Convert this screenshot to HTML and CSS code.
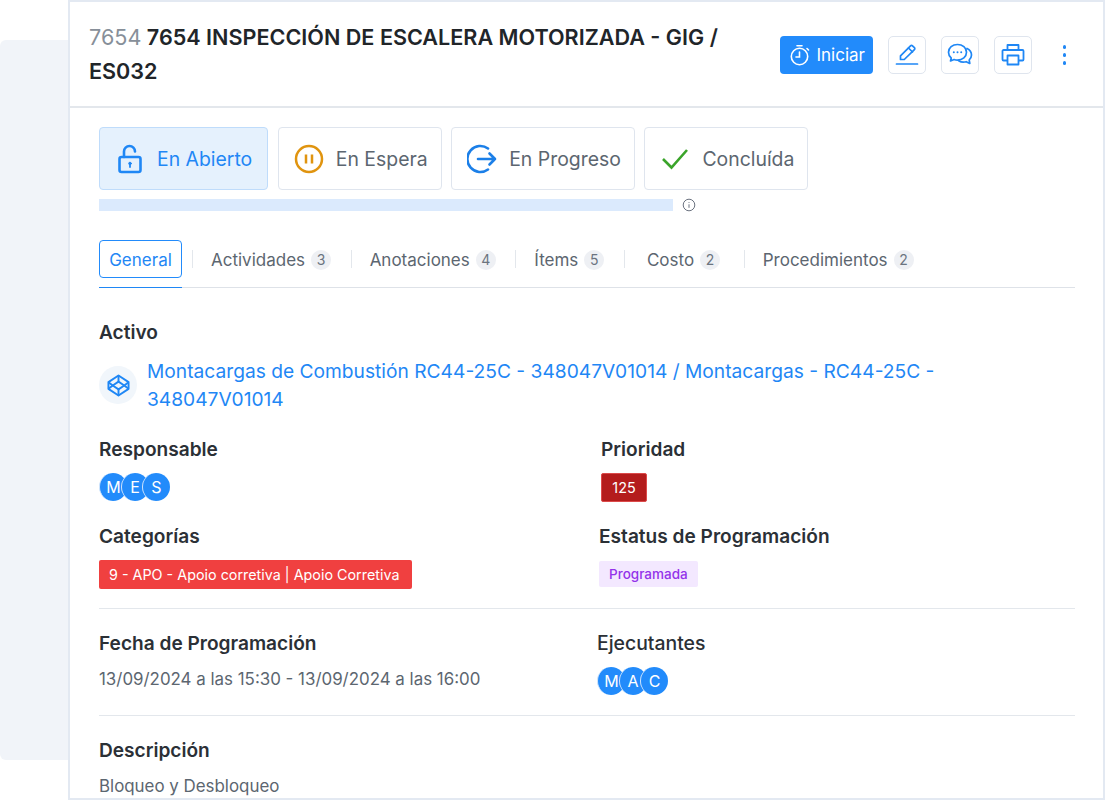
FILE: index.html
```html
<!DOCTYPE html>
<html lang="es">
  <head>
    <meta charset="UTF-8" />
    <title>Orden de servicio</title>
    <link rel="stylesheet" href="styles.css">
  </head>
  <body>
    <div class="page">
      <div class="sidebar"></div>
      <div class="panel">
        <div class="header">
          <h1 class="title"><span class="code">7654</span> 7654 INSPECCIÓN DE ESCALERA MOTORIZADA - GIG / ES032</h1>
          <div class="actions">
            <button class="startBtn">
              <svg width="22" height="22" viewBox="0 0 22 22" fill="none" stroke="#fff" stroke-width="1.6" stroke-linecap="round"><circle cx="10.5" cy="12.5" r="8.2"/><path d="M10.5 8v5H7M8 1.8h5M18 4.5l1.5 1.5"/></svg>
              Iniciar
            </button>
            <button class="iconBtn">
              <svg width="24" height="24" viewBox="0 0 24 24" fill="none" stroke="#1f87f5" stroke-width="1.7" stroke-linejoin="round" stroke-linecap="round"><path d="M5.5 16.5v-3.7L15.5 2.8a1.4 1.4 0 0 1 2 0l1.9 1.9a1.4 1.4 0 0 1 0 2L9.3 16.5z"/><path d="M13.5 5l4 4" /><path d="M1.5 21h21"/></svg>
            </button>
            <button class="iconBtn">
              <svg width="26" height="24" viewBox="0 0 26 24" fill="none" stroke="#1f87f5" stroke-width="1.7" stroke-linejoin="round" stroke-linecap="round"><path d="M10.5 1.5c-5 0-9 3.300-9 7.800 0 2.300 1 4.300 2.700 5.700l-.7 3 3.600-1.500c1 .4 2.200.6 3.400.6 5 0 9-3.300 9-7.800s-4-7.800-9-7.800z"/><path d="M20 5.500c2.700 1.300 4.500 3.700 4.500 6.500 0 2-.9 3.700-2.300 5l.6 3.500-3.600-1.800c-2.600.7-5.500.3-7.500-1"/><path d="M6.800 9.300h.01M10.500 9.300h.01M14.200 9.300h.01" stroke-width="2"/></svg>
            </button>
            <button class="iconBtn">
              <svg width="24" height="24" viewBox="0 0 24 24" fill="none" stroke="#1f87f5" stroke-width="1.8" stroke-linejoin="round"><path d="M6.500 7V2h11v5"/><path d="M6.500 17.500H2.500a1 1 0 0 1-1-1V8a1 1 0 0 1 1-1h19a1 1 0 0 1 1 1v8.500a1 1 0 0 1-1 1h-4"/><rect x="6.500" y="12.500" width="11" height="9"/><path d="M18.500 10h.01" stroke-width="2"/></svg>
            </button>
            <div class="moreBtn"><i></i><i></i><i></i></div>
          </div>
        </div>

        <div class="content">
          <div class="statusRow">
            <div class="status statusActive">
              <span class="statusIcon"><svg width="26" height="30" viewBox="0 0 26 30" fill="none" stroke="#1f87f5" stroke-width="2.600" stroke-linecap="round" stroke-linejoin="round"><path d="M7 13V7.500a5.500 5.500 0 0 1 11 0"/><rect x="2.500" y="13" width="21" height="15" rx="2"/><circle cx="13" cy="19.500" r="1.300" fill="#1f87f5" stroke-width="1"/><path d="M13 20v3" stroke-width="1.800"/></svg></span>
              En Abierto
            </div>
            <div class="status">
              <span class="statusIcon"><svg width="30" height="30" viewBox="0 0 30 30" fill="none" stroke="#e0940f" stroke-width="2.500"><circle cx="15" cy="15" r="13"/><path d="M12 10.500v9M18 10.500v9"/></svg></span>
              En Espera
            </div>
            <div class="status">
              <span class="statusIcon"><svg width="30" height="30" viewBox="0 0 30 30" fill="none" stroke="#1b7fe8" stroke-width="2.600" stroke-linecap="round" stroke-linejoin="round"><path d="M21 4.500A13 13 0 1 0 21 25.500"/><path d="M11 15h17M22.500 9.500l5.500 5.500-5.500 5.500"/></svg></span>
              En Progreso
            </div>
            <div class="status">
              <span class="statusIcon"><svg width="28" height="24" viewBox="0 0 28 24" fill="none" stroke="#3aa42a" stroke-width="2.600"><path d="M2 12l8.500 8.500L26 3"/></svg></span>
              Concluída
            </div>
          </div>

          <div class="progressRow">
            <div class="progressBar"></div>
            <svg class="infoIcon" width="14" height="14" viewBox="0 0 14 14" fill="none" stroke="#6b7280" stroke-width="1"><circle cx="7" cy="7" r="5.800"/><path d="M7 6.300v3.500M7 4.200v.8"/></svg>
          </div>

          <div class="tabs">
            <div class="tab tabActive">General</div>
            <span class="tabSep tabSepFirst"></span>
            <div class="tab">Actividades <span class="count">3</span></div>
            <span class="tabSep"></span>
            <div class="tab">Anotaciones <span class="count">4</span></div>
            <span class="tabSep"></span>
            <div class="tab">Ítems <span class="count">5</span></div>
            <span class="tabSep"></span>
            <div class="tab tabWide">Costo <span class="count">2</span></div>
            <span class="tabSep"></span>
            <div class="tab">Procedimientos <span class="count">2</span></div>
          </div>

          <h2 class="label labelActivo">Activo</h2>
          <div class="asset">
            <div class="assetIcon">
              <svg width="23" height="23" viewBox="0 0 24 24" fill="none" stroke="#1f87f5" stroke-width="2" stroke-linejoin="round"><path d="M12 1.500l10.500 7v7L12 22.500l-10.500-7v-7z"/><path d="M12 8l6 4-6 4-6-4z"/><path d="M12 1.500V8M12 16v6.500M1.500 8.500L6 12M22.500 8.500L18 12M1.500 15.500L6 12M22.500 15.500L18 12"/></svg>
            </div>
            <a class="assetLink">Montacargas de Combustión RC44-25C - 348047V01014 / Montacargas - RC44-25C - 348047V01014</a>
          </div>

          <div class="grid gridFirst">
            <div class="cell">
              <h2 class="label">Responsable</h2>
              <div class="avatars"><span>M</span><span>E</span><span>S</span></div>
            </div>
            <div class="cell cellPrio">
              <h2 class="label">Prioridad</h2>
              <span class="prio">125</span>
            </div>
          </div>

          <div class="grid gridSecond">
            <div class="cell">
              <h2 class="label">Categorías</h2>
              <span class="catTag">9 - APO - Apoio corretiva | Apoio Corretiva</span>
            </div>
            <div class="cell cellSched">
              <h2 class="label">Estatus de Programación</h2>
              <span class="schedTag">Programada</span>
            </div>
          </div>

          <hr class="divider" />

          <div class="grid">
            <div class="cell">
              <h2 class="label">Fecha de Programación</h2>
              <div class="bodyText">13/09/2024 a las 15:30 - 13/09/2024 a las 16:00</div>
            </div>
            <div class="cell cellExec">
              <h2 class="label labelPlain">Ejecutantes</h2>
              <div class="avatars"><span>M</span><span>A</span><span>C</span></div>
            </div>
          </div>

          <hr class="divider dividerLow" />

          <h2 class="label">Descripción</h2>
          <div class="bodyText">Bloqueo y Desbloqueo</div>
        </div>
      </div>
    </div>
  </body>
</html>
```
FILE: styles.css
```css
* {
  box-sizing: border-box;
}
html,
body {
  margin: 0;
  height: 800px;
  overflow: hidden;
  background: #fff;
}
body {
  font-family: Inter, "Liberation Sans", sans-serif;
  color: #212529;
}
.page {
  display: flex;
  height: 800px;
  padding-right: 1px;
}
.sidebar {
  width: 68px;
  flex: none;
  margin: 40px 0;
  background: #f1f4f9;
  border-radius: 6px 0 0 6px;
}
.panel {
  flex: 1;
  border: 2px solid #e3e9f2;
  background: #fff;
  overflow: hidden;
}
.header {
  display: flex;
  justify-content: space-between;
  height: 106px;
  padding: 18px 37px 0 19px;
  border-bottom: 2px solid #e3e7ec;
}
.title {
  width: 650px;
  margin: 0;
  font-size: 21.6px;
  font-weight: 600;
  line-height: 34px;
  color: #212529;
}
.code {
  font-weight: 400;
  color: #878f99;
}
.actions {
  display: flex;
  align-items: center;
  height: 38px;
  margin-top: 16px;
}
.startBtn {
  display: flex;
  align-items: center;
  gap: 6px;
  width: 93px;
  height: 38px;
  padding: 0 0 0 9px;
  margin-right: 15px;
  border: 0;
  border-radius: 4px;
  background: #228bfb;
  color: #fff;
  font: 400 17px Inter, sans-serif;
}
.iconBtn {
  display: flex;
  align-items: center;
  justify-content: center;
  width: 38px;
  height: 38px;
  padding: 0;
  margin-right: 15px;
  border: 1px solid #dfe5ee;
  border-radius: 5px;
  background: #fff;
}
.moreBtn {
  display: flex;
  flex-direction: column;
  gap: 4.5px;
  margin-left: 16px;
}
.moreBtn i {
  display: block;
  width: 3.5px;
  height: 3.5px;
  border-radius: 50%;
  background: #1f87f5;
}
.content {
  padding: 19px 28px 0 29px;
}
.statusRow {
  display: flex;
  gap: 9.6px;
}
.status {
  display: flex;
  align-items: center;
  gap: 12px;
  height: 63px;
  padding: 0 13px 0 15px;
  border: 1px solid #dfe5ee;
  border-radius: 4px;
  font-size: 19.4px;
  color: #5c6670;
  background: #fff;
}
.statusIcon {
  display: flex;
  align-items: center;
  justify-content: center;
  width: 30px;
}
.statusActive {
  padding-right: 15px;
  background: #e5f1fd;
  border-color: #bfdcfb;
  color: #1f87f5;
}
.progressRow {
  display: flex;
  align-items: center;
  gap: 9px;
  margin-top: 8px;
}
.progressBar {
  width: 574px;
  height: 12px;
  background: #dbeafd;
}
.tabs {
  display: flex;
  align-items: center;
  height: 48px;
  margin-top: 28px;
  padding-bottom: 9px;
  border-bottom: 1px solid #dee2e8;
  position: relative;
}
.tab {
  display: flex;
  align-items: center;
  gap: 6px;
  height: 38px;
  padding-top: 1px;
  font-size: 17px;
  color: #5c6670;
}
.tabWide {
  padding-left: 4px;
  padding-right: 4px;
}
.tabActive {
  width: 83px;
  justify-content: center;
  border: 1px solid #228bfb;
  border-radius: 4px;
  color: #1f87f5;
}
.tabActive::after {
  content: "";
  position: absolute;
  left: 0;
  bottom: -1px;
  width: 83px;
  height: 1px;
  background: #1f87f5;
}
.tabSep {
  width: 1px;
  height: 18px;
  margin: 0 18px 0 19.6px;
  background: #e3e7ec;
}
.tabSepFirst {
  margin-left: 10px;
}
.count {
  display: inline-block;
  width: 20px;
  height: 20px;
  border-radius: 50%;
  background: #eef0f4;
  color: #6b7480;
  font-size: 14px;
  line-height: 20px;
  text-align: center;
}
.label {
  margin: 0;
  font-size: 19.1px;
  font-weight: 600;
  line-height: 24px;
  color: #2b3036;
}
.labelPlain {
  font-size: 19.4px;
  font-weight: 500;
}
.labelActivo {
  margin-top: 32px;
}
.asset {
  display: flex;
  align-items: center;
  gap: 10px;
  margin-top: 13px;
}
.assetIcon {
  display: flex;
  align-items: center;
  justify-content: center;
  flex: none;
  width: 38px;
  height: 38px;
  border-radius: 50%;
  background: #f1f6fb;
}
.assetLink {
  font-size: 19.2px;
  line-height: 28px;
  color: #1f87f5;
  padding-right: 20px;
}
.grid {
  display: flex;
}
.gridFirst {
  margin-top: 24px;
}
.gridSecond {
  margin-top: 22px;
}
.cell {
  flex: 1;
}
.cellPrio {
  flex: none;
  width: 474px;
}
.cellSched {
  flex: none;
  width: 476px;
}
.cellExec {
  flex: none;
  width: 478px;
}
.avatars {
  display: flex;
  margin-top: 12px;
  height: 28px;
}
.avatars span {
  display: block;
  width: 28px;
  height: 28px;
  margin-right: -6.5px;
  border-radius: 50%;
  border: 1px solid #cfe4fc;
  border-width: 0 0 0 1px;
  background: #228bfb;
  color: #fff;
  font-size: 16px;
  line-height: 28px;
  text-align: center;
}
.prio {
  display: inline-block;
  margin-top: 12px;
  width: 46px;
  height: 29px;
  border: 1px solid #dc4a4a;
  border-radius: 2px;
  background: #b41c1c;
  color: #fff;
  font-size: 14.4px;
  line-height: 27px;
  text-align: center;
}
.catTag {
  display: inline-block;
  margin-top: 12px;
  height: 29px;
  padding: 0 13px 0 10px;
  border-radius: 2px;
  background: #f04040;
  color: #fff;
  font-size: 14.35px;
  line-height: 29px;
}
.schedTag {
  display: inline-block;
  margin-top: 13px;
  height: 26px;
  padding: 0 10px;
  border-radius: 2px;
  background: #f3e8ff;
  color: #9333ea;
  font-size: 13.5px;
  font-weight: 500;
  line-height: 26px;
}
.divider {
  height: 1px;
  margin: 19px 0 22px;
  border: 0;
  background: #e3e7ec;
}
.dividerLow {
  margin: 20px 0 22px;
}
.bodyText {
  margin-top: 12px;
  font-size: 16.9px;
  line-height: 24px;
  color: #5c6670;
}
```
